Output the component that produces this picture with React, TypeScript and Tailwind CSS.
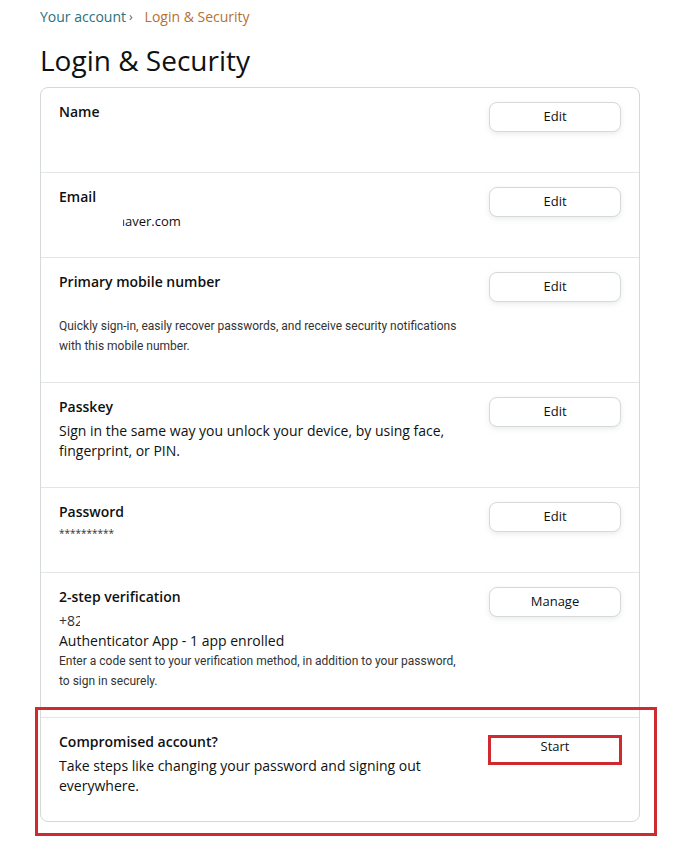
import React from "react";

type RowProps = {
    title: string;
    action: string;
    children?: React.ReactNode;
    highlight?: boolean;
};

const Row = ({title, action, children, highlight}: RowProps) => {
    return (
        <div className="flex justify-between pl-[18px] pr-[18px] pt-[14px] pb-[26px] min-h-[85px] last:pb-[25px]">
            <div className="w-[404px]">
                <h3 className="text-[14px] leading-[20px] font-semibold text-[#0f1111] mb-[4px]">{title}</h3>
                {children}
            </div>
            <div className="relative">
                <button
                    className={
                        highlight
                            ? "w-[132px] h-[30px] rounded-[8px] bg-white text-[13px] text-[#0f1111]"
                            : "w-[132px] h-[30px] rounded-[8px] border border-[#d5d9d9] bg-white text-[13px] text-[#0f1111] shadow-[0_2px_5px_rgba(213,217,217,0.5)]"
                    }>
                    {action}
                </button>
                {highlight && (
                    <div className="absolute left-[-1px] top-[3px] w-[134px] h-[30px] border-[3px] border-[#cf2a2f]"/>
                )}
            </div>
        </div>
    );
};

const small = "font-['Roboto',sans-serif] text-[12px] leading-[20px] text-[#333333]";

export default function App() {
    return (
        <div className="relative min-h-screen bg-white font-['Open_Sans','Noto_Sans',sans-serif] text-[#0f1111]">
            <div className="pl-[40px] pt-[7px] w-[640px]">
                <nav className="flex items-center text-[14px] leading-[20px]">
                    <span className="text-[#2b6f7e]">Your account</span>
                    <span className="text-[#2b6f7e] ml-[3px] text-[12px]">›</span>
                    <span className="text-[#b8702f] ml-[12px]">Login &amp; Security</span>
                </nav>
                <h1 className="mt-[15px] text-[28px] leading-[36px] font-normal text-[#0f1111]">Login &amp; Security</h1>
                <div className="mt-[9px] border border-[#d5d9d9] rounded-[8px] divide-y divide-[#e3e6e6]">
                    <Row title="Name" action="Edit"/>
                    <Row title="Email" action="Edit">
                        <div className="relative text-[13px] leading-[20px] text-[#0f1111]">
                            <span className="inline-block w-[58px]">&nbsp;</span>naver.com
                            <div className="absolute left-[-4px] top-[-2px] w-[68px] h-[24px] bg-white"/>
                        </div>
                    </Row>
                    <Row title="Primary mobile number" action="Edit">
                        <div className="h-[20px]"/>
                        <p className={small}>
                            Quickly sign-in, easily recover passwords, and receive security notifications with this mobile number.
                        </p>
                    </Row>
                    <Row title="Passkey" action="Edit">
                        <p className="text-[14px] leading-[20px] text-[#0f1111]">
                            Sign in the same way you unlock your device, by using face, fingerprint, or PIN.
                        </p>
                    </Row>
                    <Row title="Password" action="Edit">
                        <p className="text-[10px] leading-[14px] text-[#333333]">**********</p>
                    </Row>
                    <Row title="2-step verification" action="Manage">
                        <div className="relative text-[14px] leading-[20px] text-[#333333]">
                            +82
                            <div className="absolute left-[21px] top-0 w-[80px] h-[20px] bg-white"/>
                        </div>
                        <p className="text-[14px] leading-[20px] text-[#0f1111]">Authenticator App - 1 app enrolled</p>
                        <p className={small}>
                            Enter a code sent to your verification method, in addition to your password, to sign in securely.
                        </p>
                    </Row>
                    <Row title="Compromised account?" action="Start" highlight>
                        <p className="text-[14px] leading-[20px] text-[#0f1111]">
                            Take steps like changing your password and signing out everywhere.
                        </p>
                    </Row>
                </div>
            </div>
            <div className="absolute left-[35px] top-[707px] w-[622px] h-[129px] border-[3px] border-[#cf2a2f]"/>
        </div>
    );
}
